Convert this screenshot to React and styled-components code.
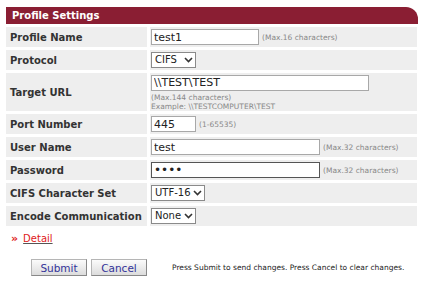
import React from 'react';
import styled, { createGlobalStyle } from 'styled-components';

const GlobalStyle = createGlobalStyle`
  body {
    margin: 0;
    background: #fff;
    font-family: 'DejaVu Sans', Verdana, sans-serif;
    color: #333;
  }
`;

const rows = [
  { label: 'Profile Name', kind: 'text', value: 'test1', width: 108, note: '(Max.16 characters)' },
  { label: 'Protocol', kind: 'select', value: 'CIFS', width: 45 },
  { label: 'Target URL', kind: 'url', value: '\\\\TEST\\TEST', width: 218 },
  { label: 'Port Number', kind: 'text', value: '445', width: 45, note: '(1-65535)' },
  { label: 'User Name', kind: 'text', value: 'test', width: 169, note: '(Max.32 characters)' },
  { label: 'Password', kind: 'password', value: 'test', width: 169, note: '(Max.32 characters)' },
  { label: 'CIFS Character Set', kind: 'select', value: 'UTF-16', width: 54 },
  { label: 'Encode Communication', kind: 'select', value: 'None', width: 45 },
];

const Chevron = () => (
  <svg width="9" height="6" viewBox="0 0 9 6">
    <path d="M1 1 L4.5 4.5 L8 1" fill="none" stroke="#333" strokeWidth="1.6" />
  </svg>
);

const App = () => {
  const renderValue = (r) => {
    if (r.kind === 'select') {
      return (
        <SelectBox $w={r.width}>
          <Select defaultValue={r.value}>
            <option>{r.value}</option>
          </Select>
          <Arrow>
            <Chevron />
          </Arrow>
        </SelectBox>
      );
    }
    if (r.kind === 'url') {
      return (
        <UrlStack>
          <Input $w={r.width} defaultValue={r.value} />
          <Hint>(Max.144 characters)</Hint>
          <Hint>Example: \\TESTCOMPUTER\TEST</Hint>
        </UrlStack>
      );
    }
    return (
      <>
        <Input
          $w={r.width}
          $dark={r.kind === 'password'}
          type={r.kind === 'password' ? 'password' : 'text'}
          defaultValue={r.value}
        />
        {r.note && <Note>{r.note}</Note>}
      </>
    );
  };

  return (
    <Page>
      <GlobalStyle />
      <Header>Profile Settings</Header>
      <Form>
        {rows.map((r) => (
          <React.Fragment key={r.label}>
            <LabelCell $tall={r.kind === 'url'}>{r.label}</LabelCell>
            <ValueCell $tall={r.kind === 'url'}>{renderValue(r)}</ValueCell>
          </React.Fragment>
        ))}
      </Form>
      <DetailRow>
        <Raquo>»</Raquo>
        <DetailLink href="#">Detail</DetailLink>
      </DetailRow>
      <Actions>
        <Button>Submit</Button>
        <Button>Cancel</Button>
        <ActionNote>Press Submit to send changes. Press Cancel to clear changes.</ActionNote>
      </Actions>
    </Page>
  );
};

export default App;

const Page = styled.div`
  width: 412px;
  padding: 7px 0 0 6px;
`;

const Header = styled.div`
  display: flex;
  align-items: center;
  height: 17px;
  padding-left: 6px;
  background: #8a1e33;
  color: #fff;
  font-size: 10px;
  font-weight: bold;
  border-top-right-radius: 12px;
`;

const Form = styled.div`
  display: grid;
  grid-template-columns: 141px 267px;
  gap: 3px;
  margin-top: 3px;
`;

const LabelCell = styled.div`
  display: flex;
  align-items: center;
  height: ${(p) => (p.$tall ? 38 : 20)}px;
  padding-left: 4px;
  background: #eeeeee;
  font-size: 10px;
  font-weight: bold;
  color: #333;
`;

const ValueCell = styled.div`
  display: flex;
  align-items: center;
  gap: 3px;
  height: ${(p) => (p.$tall ? 38 : 20)}px;
  padding-left: 1px;
  background: #eeeeee;
`;

const Input = styled.input`
  box-sizing: border-box;
  width: ${(p) => p.$w}px;
  height: 16px;
  margin: 0;
  padding: 0 2px;
  border: 1px solid ${(p) => (p.$dark ? '#555' : '#a8a8a8')};
  background: #fff;
  font-family: 'DejaVu Sans', Verdana, sans-serif;
  font-size: ${(p) => (p.$dark ? 12 : 11)}px;
  color: #222;
  outline: none;
`;

const Note = styled.span`
  font-size: 7.5px;
  color: #888;
  white-space: nowrap;
`;

const UrlStack = styled.div`
  display: flex;
  flex-direction: column;
  padding-top: 1px;
`;

const Hint = styled.span`
  font-size: 7.5px;
  line-height: 9px;
  color: #888;
  white-space: nowrap;
  &:first-of-type {
    margin-top: 2px;
  }
`;

const SelectBox = styled.div`
  position: relative;
  width: ${(p) => p.$w}px;
  height: 16px;
`;

const Select = styled.select`
  box-sizing: border-box;
  appearance: none;
  display: block;
  width: 100%;
  height: 16px;
  margin: 0;
  padding: 0 12px 0 3px;
  border: 1px solid #8a8a8a;
  border-radius: 0;
  background: #fff;
  font-family: 'DejaVu Sans', Verdana, sans-serif;
  font-size: 10px;
  line-height: 14px;
  color: #222;
  outline: none;
`;

const Arrow = styled.span`
  position: absolute;
  right: 3px;
  top: 5px;
  display: flex;
  pointer-events: none;
`;

const DetailRow = styled.div`
  display: flex;
  align-items: center;
  gap: 5px;
  margin-top: 6px;
  padding-left: 5px;
  height: 13px;
`;

const Raquo = styled.span`
  color: #e02020;
  font-size: 11px;
  font-weight: bold;
`;

const DetailLink = styled.a`
  color: #e02020;
  font-size: 10px;
  text-decoration: underline;
  text-decoration-color: #555;
`;

const Actions = styled.div`
  display: flex;
  align-items: center;
  gap: 4px;
  margin-top: 14px;
  padding-left: 25px;
`;

const Button = styled.button`
  box-sizing: border-box;
  width: 56px;
  height: 17px;
  margin: 0;
  padding: 0;
  border: 1px solid #b5b5b5;
  border-right-color: #888;
  border-bottom-color: #888;
  background: linear-gradient(#fbfbfb, #dcdcdc);
  font-family: 'DejaVu Sans', Verdana, sans-serif;
  font-size: 10.5px;
  color: #333399;
`;

const ActionNote = styled.span`
  margin-left: 21px;
  font-size: 7.5px;
  color: #222;
  white-space: nowrap;
`;
